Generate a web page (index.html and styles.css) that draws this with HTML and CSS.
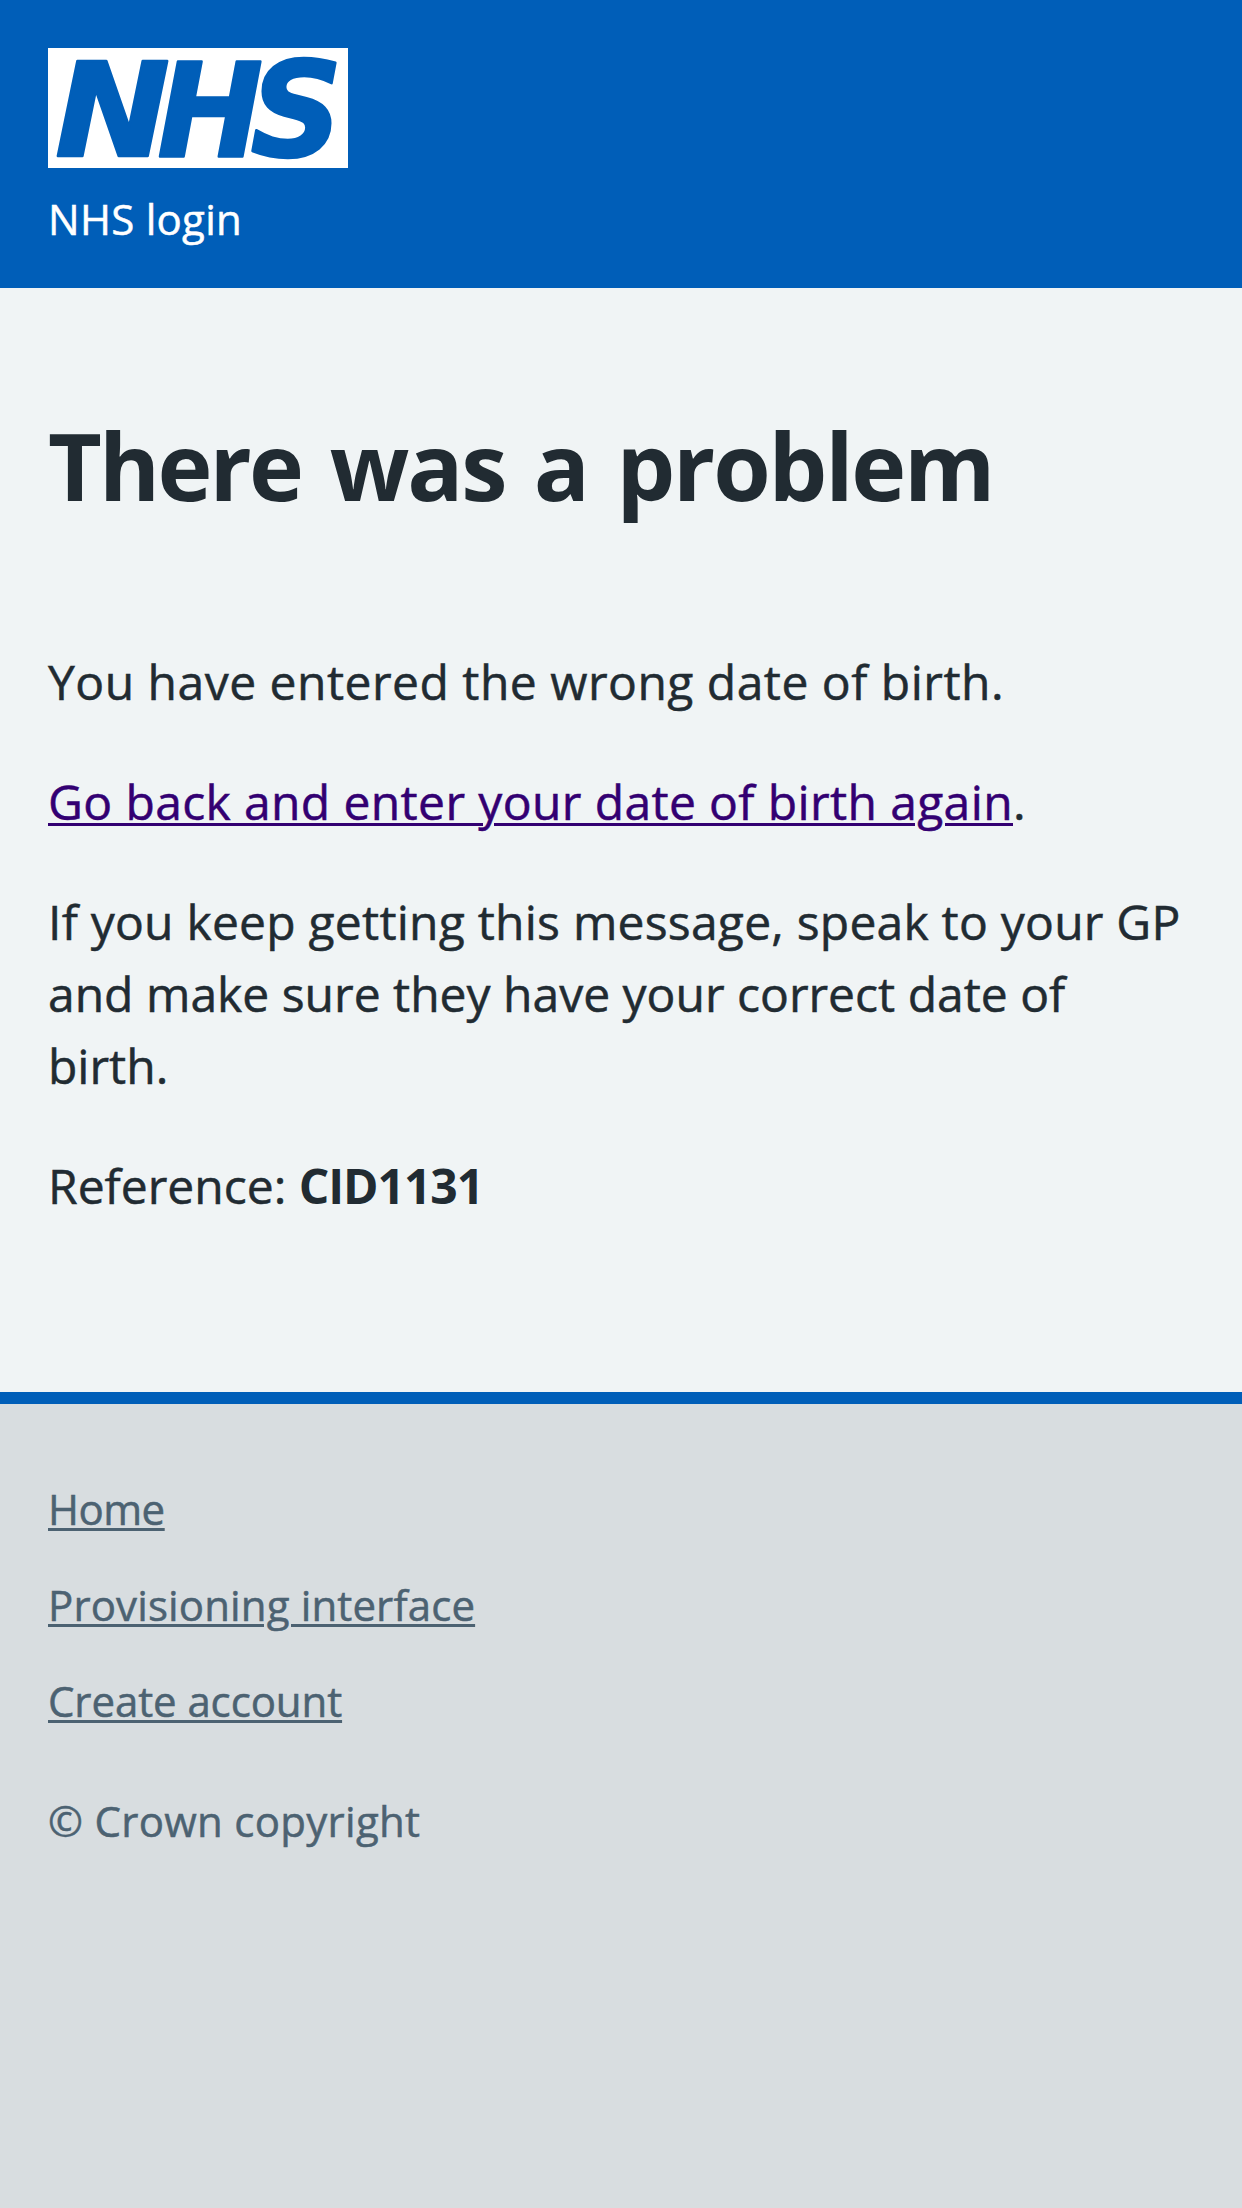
FILE: index.html
```
<!DOCTYPE html>
<html lang="en">
<head>
<meta charset="utf-8">
<title>There was a problem - NHS login</title>
<link rel="stylesheet" href="styles.css">
</head>
<body>
<header class="header">
  <svg class="logo" viewBox="0 0 300 120" role="img" aria-label="NHS">
    <rect width="300" height="120" fill="#fff"/>
    <g class="logo-text">
      <text transform="translate(7 107.5) scale(1.058 1)">N</text>
      <text transform="translate(109.3 107.5) scale(.973 1)">H</text>
      <text transform="translate(202.4 107.6) scale(.983 1.015)">S</text>
    </g>
  </svg>
  <div class="service">NHS login</div>
</header>
<main class="main">
  <h1 class="heading"><span class="tight">There</span> was a problem</h1>
  <p class="para intro">You have entered the wrong date of birth.</p>
  <p class="para"><a class="back-link" href="#">Go back and enter your date of birth again</a>.</p>
  <p class="para"><span class="looser">If you keep getting this message, speak to your GP</span> and make sure they have your correct date of birth.</p>
  <p class="para">Reference: <strong class="code">CID1131</strong></p>
</main>
<footer class="footer">
  <ul class="links">
    <li><a class="home" href="#">Home</a></li>
    <li><a class="provisioning" href="#">Provisioning interface</a></li>
    <li><a class="create" href="#">Create account</a></li>
  </ul>
  <p class="copyright">© Crown copyright</p>
</footer>
</body>
</html>
```
FILE: styles.css
```
* { box-sizing: border-box; }
body {
  margin: 0;
  min-height: 100vh;
  display: flex;
  flex-direction: column;
  background: #d8dde0;
  color: #212b32;
  font-family: "Open Sans", "Liberation Sans", sans-serif;
  -webkit-text-stroke: .5px currentColor;
}
.header {
  height: 288px;
  padding: 48px;
  background: #005eb8;
  color: #fff;
}
.logo { display: block; width: 300px; height: 120px; overflow: visible; }
.logo-text {
  -webkit-text-stroke: 0;
  fill: #005eb8;
  stroke: #005eb8;
  stroke-width: 2.4px;
  stroke-linejoin: round;
  font: oblique 700 130px "DejaVu Sans", sans-serif;
}
.service {
  margin-top: 19px;
  font-size: 42px;
  line-height: 63px;
  letter-spacing: .28px;
}
.main {
  height: 1104px;
  padding: 120px 48px 0;
  background: #f0f4f5;
}
.heading {
  margin: 0 0 124px;
  font-size: 93px;
  line-height: 114px;
  letter-spacing: -2.2px;
  word-spacing: 6.7px;
  -webkit-text-stroke: 0;
}
.tight { letter-spacing: -2.8px; }
.para {
  margin: 0 0 48px;
  font-size: 48px;
  line-height: 72px;
}
.intro { letter-spacing: .49px; }
.looser { letter-spacing: .23px; }
.back-link {
  color: #330072;
  letter-spacing: .38px;
  text-decoration-thickness: 3px;
  text-underline-offset: 3px;
}
.code { letter-spacing: -1.05px; -webkit-text-stroke: 0; }
.footer {
  flex: 1;
  padding: 73px 48px 0;
  border-top: 12px solid #005eb8;
  color: #4c6272;
  font-size: 42px;
  line-height: 63px;
}
.links {
  display: flex;
  flex-direction: column;
  gap: 33px;
  margin: 0 0 57px;
  padding: 0;
  list-style: none;
}
.links a {
  color: inherit;
  text-decoration-thickness: 3px;
  text-underline-offset: 3px;
}
.home { letter-spacing: -.5px; }
.provisioning { letter-spacing: .13px; }
.create { letter-spacing: -.09px; }
.copyright { margin: 0; letter-spacing: .29px; }
```
